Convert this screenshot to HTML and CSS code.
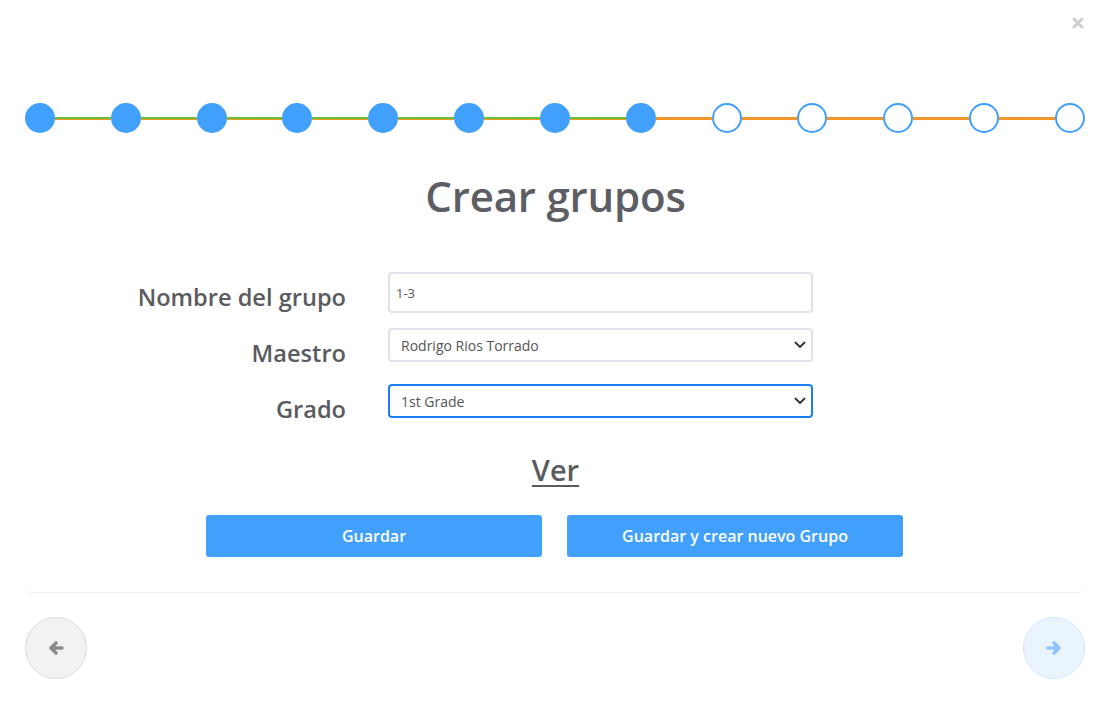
FILE: index.html
```html
<html>
    <head>
        <title>Crear grupos</title>
        <meta charset="UTF-8" />
        <link rel="stylesheet" href="styles.css">
    </head>
    <body>
        <div class="modal">
            <button class="close" type="button">
                <svg width="12" height="12" viewBox="0 0 12 12">
                    <path d="M2 2L10 10M10 2L2 10" stroke="#cfcfcf" stroke-width="3" stroke-linecap="round" />
                </svg>
            </button>

            <div class="steps">
                <span class="dot done"></span><span class="line done"></span>
                <span class="dot done"></span><span class="line done"></span>
                <span class="dot done"></span><span class="line done"></span>
                <span class="dot done"></span><span class="line done"></span>
                <span class="dot done"></span><span class="line done"></span>
                <span class="dot done"></span><span class="line done"></span>
                <span class="dot done"></span><span class="line done"></span>
                <span class="dot done"></span><span class="line"></span>
                <span class="dot"></span><span class="line"></span>
                <span class="dot"></span><span class="line"></span>
                <span class="dot"></span><span class="line"></span>
                <span class="dot"></span><span class="line"></span>
                <span class="dot"></span>
            </div>

            <div class="card">
                <h1>Crear grupos</h1>
                <form class="form">
                    <label for="nombre">Nombre del grupo</label>
                    <input id="nombre" class="field" type="text" value="1-3" />

                    <label for="maestro">Maestro</label>
                    <div class="select-wrap">
                        <select id="maestro" class="field select">
                            <option>Rodrigo Rios Torrado</option>
                        </select>
                        <svg class="chevron" width="12" height="8" viewBox="0 0 12 8">
                            <path d="M1.5 1.5L6 6L10.5 1.5" fill="none" stroke="#343a40" stroke-width="2" stroke-linecap="round" stroke-linejoin="round" />
                        </svg>
                    </div>

                    <label for="grado">Grado</label>
                    <div class="select-wrap">
                        <select id="grado" class="field select active">
                            <option>1st Grade</option>
                        </select>
                        <svg class="chevron" width="12" height="8" viewBox="0 0 12 8">
                            <path d="M1.5 1.5L6 6L10.5 1.5" fill="none" stroke="#343a40" stroke-width="2" stroke-linecap="round" stroke-linejoin="round" />
                        </svg>
                    </div>
                </form>

                <a class="ver" href="#">Ver</a>

                <div class="actions">
                    <button class="btn" type="button">Guardar</button>
                    <button class="btn" type="button">Guardar y crear nuevo Grupo</button>
                </div>
            </div>

            <div class="nav">
                <button class="round prev" type="button">
                    <svg width="18" height="16" viewBox="0 0 18 16">
                        <path d="M15 8H4M9 3L4 8L9 13" fill="none" stroke="#8a8b8f" stroke-width="3.6" stroke-linecap="round" stroke-linejoin="round" />
                    </svg>
                </button>
                <button class="round next" type="button">
                    <svg width="18" height="16" viewBox="0 0 18 16">
                        <path d="M3 8H14M9 3L14 8L9 13" fill="none" stroke="#8ec3fa" stroke-width="3.6" stroke-linecap="round" stroke-linejoin="round" />
                    </svg>
                </button>
            </div>
        </div>
    </body>
</html>
```

FILE: styles.css
```css
body {
    margin: 0;
    background: #fff;
    color: #5c5d62;
    font-family: "Open Sans", "Noto Sans", sans-serif;
}
.modal {
    position: relative;
    width: 1107px;
    height: 716px;
    padding: 103px 22px 0 25px;
    box-sizing: border-box;
}

/* close cross, top right */
.close {
    position: absolute;
    top: 16px;
    right: 22px;
    border: 0;
    background: none;
    padding: 0;
    width: 14px;
    height: 14px;
    display: flex;
    align-items: center;
    justify-content: center;
}

/* progress steps */
.steps {
    display: flex;
    align-items: center;
    height: 30px;
}
.dot {
    width: 30px;
    height: 30px;
    box-sizing: border-box;
    border-radius: 50%;
    border: 2px solid #42a0fd;
    background: #fff;
    flex: none;
}
.dot.done {
    background: #42a0fd;
}
.line {
    flex: 1;
    height: 3px;
    background: #f0962a;
}
.line.done {
    background: linear-gradient(#6cbf3b 0, #6cbf3b 2px, #f0962a 2px);
}

/* card */
.card {
    margin-top: 17px;
    height: 443px;
    box-sizing: border-box;
    border-bottom: 1px solid #eeeef1;
    border-radius: 0 0 7px 7px;
    padding: 19px 0 0 1px;
}
h1 {
    margin: 0;
    text-align: center;
    font-size: 42px;
    font-weight: 600;
    line-height: 54px;
    color: #5d5e63;
    letter-spacing: -0.2px;
}
.form {
    display: grid;
    grid-template-columns: 320px 425px;
    grid-auto-rows: 56px;
    column-gap: 42px;
    margin: 49px 0 0;
}
.form label {
    text-align: right;
    font-size: 23.6px;
    font-weight: 600;
    line-height: 50px;
    color: #5a5b60;
}
.field {
    display: block;
    width: 100%;
    box-sizing: border-box;
    border: 2px solid #e1e3ec;
    border-radius: 4px;
    background: #fff;
    font-family: "Open Sans", "Noto Sans", sans-serif;
    color: #555;
    outline: none;
}
input.field {
    height: 41px;
    padding: 0 6px;
    font-size: 13px;
}
.select-wrap {
    position: relative;
}
.select {
    appearance: none;
    -webkit-appearance: none;
    height: 34px;
    padding: 0 30px 0 11px;
    font-size: 14px;
}
.select.active {
    border-color: #1a7ff2;
}
.chevron {
    position: absolute;
    right: 7px;
    top: 13px;
    pointer-events: none;
}
.ver {
    display: block;
    width: max-content;
    margin: 10px auto 0;
    font-size: 29px;
    font-weight: 600;
    line-height: 40px;
    color: #5a5b60;
    text-decoration: underline;
    text-underline-offset: 4px;
    text-decoration-thickness: 2px;
}
.actions {
    display: flex;
    gap: 25px;
    margin: 25px 0 0 180px;
}
.btn {
    width: 336px;
    height: 42px;
    border: 0;
    border-radius: 3px;
    background: #42a0fd;
    color: #fff;
    font-family: "Open Sans", "Noto Sans", sans-serif;
    font-size: 16px;
    font-weight: 600;
    cursor: pointer;
}

/* bottom navigation */
.nav {
    display: flex;
    justify-content: space-between;
    margin-top: 24px;
}
.round {
    width: 62px;
    height: 62px;
    border-radius: 50%;
    display: flex;
    align-items: center;
    justify-content: center;
    padding: 0;
    cursor: pointer;
}
.prev {
    background: #f2f2f3;
    border: 1px solid #d9d9db;
}
.next {
    background: #eaf4ff;
    border: 1px solid #d4e8fd;
}
```
